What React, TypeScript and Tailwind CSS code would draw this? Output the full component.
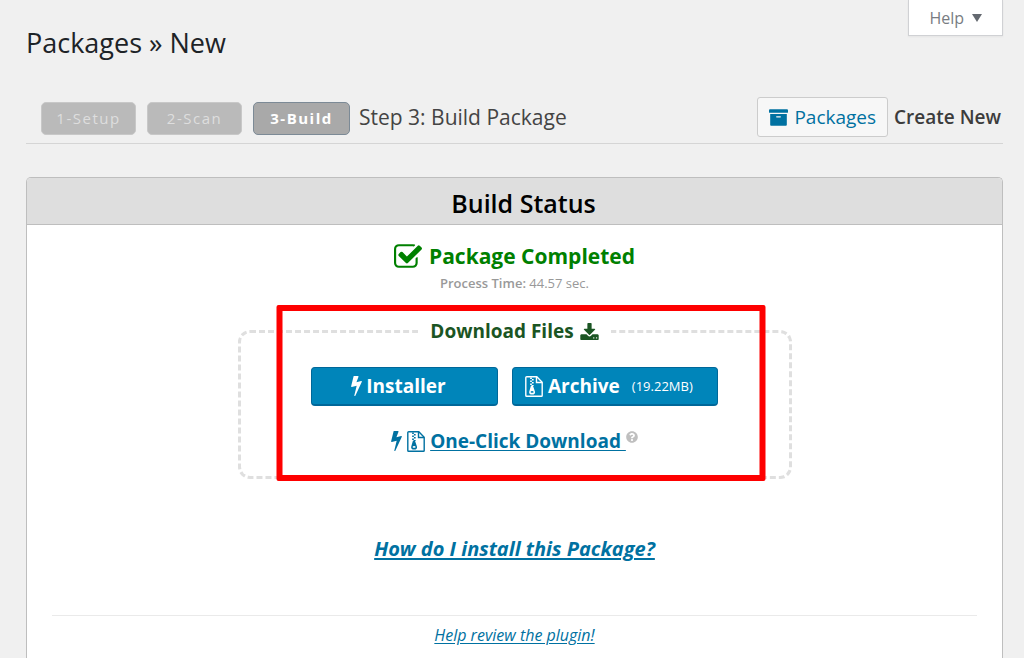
import React from "react";
import { FaArchive, FaQuestionCircle } from "react-icons/fa";

type IconProps = { className?: string };

function CheckSquareIcon({ className }: IconProps) {
  return (
    <svg viewBox="64 128 1664 1408" fill="currentColor" className={className} aria-hidden="true">
      <path d="M1472 930v318q0 119-84.5 203.5t-203.5 84.5h-832q-119 0-203.5-84.5t-84.5-203.5v-832q0-119 84.5-203.5t203.5-84.5h832q63 0 117 25 15 7 18 23 3 17-9 29l-49 49q-10 10-23 10-3 0-9-2-23-6-45-6h-832q-66 0-113 47t-47 113v832q0 66 47 113t113 47h832q66 0 113-47t47-113v-254q0-13 9-22l64-64q10-10 23-10 6 0 12 3 20 8 20 29zm231-489l-814 814q-24 24-57 24t-57-24l-430-430q-24-24-24-57t24-57l110-110q24-24 57-24t57 24l263 263 647-647q24-24 57-24t57 24l110 110q24 24 24 57t-24 57z" />
    </svg>
  );
}

function BoltIcon({ className }: IconProps) {
  return (
    <svg viewBox="448 128 896 1664" fill="currentColor" className={className} aria-hidden="true">
      <path d="M1333 566q18 20 7 44l-540 1157q-13 25-42 25-4 0-14-2-17-5-25.5-19t-4.5-30l197-808-406 101q-4 1-12 1-18 0-31-11-18-15-13-39l201-825q4-14 16-23t28-9h328q19 0 32 12.5t13 29.5q0 8-5 18l-171 463 396-98q8-2 12-2 19 0 34 15z" />
    </svg>
  );
}

function DownloadIcon({ className }: IconProps) {
  return (
    <svg viewBox="64 0 1664 1536" fill="currentColor" className={className} aria-hidden="true">
      <path d="M1344 1344q0-26-19-45t-45-19-45 19-19 45 19 45 45 19 45-19 19-45zm256 0q0-26-19-45t-45-19-45 19-19 45 19 45 45 19 45-19 19-45zm128-224v320q0 40-28 68t-68 28h-1472q-40 0-68-28t-28-68v-320q0-40 28-68t68-28h465l135 136q58 56 136 56t136-56l136-136h464q40 0 68 28t28 68zm-325-569q17 41-14 70l-448 448q-18 19-45 19t-45-19l-448-448q-31-29-14-70 17-39 59-39h256v-448q0-26 19-45t45-19h256q26 0 45 19t19 45v448h256q42 0 59 39z" />
    </svg>
  );
}

function ZipFileIcon({ className }: IconProps) {
  return (
    <svg viewBox="0 0 18 21" fill="none" stroke="currentColor" className={className} aria-hidden="true">
      <path d="M1.8 .8h10l5.4 5.4v13.2q0 .8-.8.8H1.6q-.8 0-.8-.8V1.6q0-.8 1-.8z" strokeWidth="1.4" />
      <path d="M11.5 1v5.5H17" strokeWidth="1.4" />
      <path d="M6 1.5v8M7.8 3v7" strokeWidth="1.7" strokeDasharray="1.5 1.5" />
      <path
        d="M6 9.5h1.9l2.1 6.2q.5 2.8-2.9 2.8t-2.9-2.8zM7.1 15q-1.5 0-1.5.9t1.5.9 1.5-.9-1.5-.9z"
        fill="currentColor"
        fillRule="evenodd"
        stroke="none"
      />
    </svg>
  );
}

export default function App() {
  return (
    <div className="flex min-h-screen flex-col bg-[#f0f0f0] pl-[26px] pr-[21px] font-['Open_Sans','Noto_Sans',sans-serif] text-[#3c434a]">
      <header className="flex items-start justify-between">
        <h1 className="pt-[25px] text-[27px] leading-9 font-normal text-[#1d2327]">Packages » New</h1>
        <button className="flex h-9 items-center gap-2 border border-t-0 border-[#d0d1d4] bg-white px-5 text-base text-[#787c82] shadow-xs">
          Help
          <svg viewBox="0 0 10 8" className="h-2 w-2.5 fill-[#646970]" aria-hidden="true">
            <path d="M0 0h10L5 8z" />
          </svg>
        </button>
      </header>

      <div className="mt-9 flex h-[47px] items-start justify-between border-b border-[#d5d5d5]">
        <div className="flex items-center pl-[15px]">
          <ol className="flex items-center gap-[11px] pt-[5px] text-center text-[15px] leading-[31px] tracking-widest">
            <li className="w-[95px] rounded-[5px] border border-[#c8c8c8] bg-[#bababa] text-[#dedede]">1-Setup</li>
            <li className="w-[95px] rounded-[5px] border border-[#c8c8c8] bg-[#bababa] text-[#dedede]">2-Scan</li>
            <li className="w-[97px] rounded-[5px] border border-[#7c8a96] bg-[#a9a9a9] font-bold text-white">3-Build</li>
          </ol>
          <span className="pt-0.5 pl-[9px] text-[21px] leading-8 font-normal text-[#444]">Step 3: Build Package</span>
        </div>
        <div className="flex items-center gap-[6px] pr-0.5">
          <a href="#packages" className="flex h-10 items-center gap-[6px] rounded-[3px] border border-[#ccc] bg-[#f7f7f7] px-[11px] text-[19px] font-medium text-[#0071a1]">
            <FaArchive className="size-[19px]" />
            Packages
          </a>
          <span className="text-[19px] font-semibold text-[#3c3c3c]">Create New</span>
        </div>
      </div>

      <main className="mt-[33px] flex grow flex-col rounded-t-[5px] border border-b-0 border-[#bebebe] bg-white">
        <h2 className="rounded-t-[4px] border-b border-[#bebebe] bg-[#dedede] pt-1 pl-[18px] text-center text-[25px] leading-[42px] font-semibold text-black">
          Build Status
        </h2>
        <div className="flex flex-col items-center px-[25px]">
          <div className="flex items-center gap-[7px] pt-[15px] text-[21px] leading-8 font-bold text-[#008000]">
            <CheckSquareIcon className="h-6 w-7" />
            Package Completed
          </div>
          <p className="pt-[3px] text-[13px] leading-4 text-[#999]">
            <span className="font-semibold">Process Time:</span> 44.57 sec.
          </p>

          <div className="relative mt-[14px] flex w-full flex-col items-center pb-0.5">
            <fieldset className="w-[554px] max-w-full rounded-[12px] border-3 border-dashed border-[#dfdfdf] pb-5">
              <legend className="mx-auto flex items-center gap-[6px] px-3 text-[19px] leading-[52px] font-bold text-[#1b5523]">
                Download Files
                <DownloadIcon className="h-[17px] w-[19px]" />
              </legend>
              <div className="flex justify-center gap-[14px] pt-[10px] text-[19px] font-bold text-white">
                <button className="flex h-[39px] w-[187px] items-center justify-center gap-1 rounded-[4px] border border-b-2 border-[#006799] bg-[#0085ba] pr-3">
                  <BoltIcon className="h-5 w-[11px]" />
                  Installer
                </button>
                <button className="flex h-[39px] w-[206px] items-center gap-[5px] rounded-[4px] border border-b-2 border-[#006799] bg-[#0085ba] pl-3">
                  <ZipFileIcon className="h-[21px] w-[18px]" />
                  Archive
                  <span className="pt-0.5 pl-[7px] text-[13px] font-normal">(19.22MB)</span>
                </button>
              </div>
              <div className="flex items-center justify-center gap-[5px] pt-5 text-[19px] leading-[30px] font-bold text-[#0071a1]">
                <BoltIcon className="h-5 w-[11px]" />
                <ZipFileIcon className="h-[21px] w-[18px]" />
                <span className="flex items-center">
                  <a href="#download" className="underline underline-offset-2">One-Click Download&nbsp;</a>
                  <FaQuestionCircle className="mb-2 size-3 text-[#bfbfbf]" />
                </span>
              </div>
            </fieldset>
            <div className="pointer-events-none absolute inset-y-0 left-1/2 ml-1.5 w-[489px] -translate-x-1/2 rounded-[2px] border-6 border-[#fe0000]" />
          </div>

          <a href="#install" className="mt-[54px] text-xl leading-7 font-bold text-[#0071a1] italic underline underline-offset-2">
            How do I install this Package?
          </a>
          <div className="mt-[52px] w-full border-t border-[#eaeaea] pt-[7px] text-center">
            <a href="#review" className="text-base leading-6 text-[#0071a1] italic underline underline-offset-2">Help review the plugin!</a>
          </div>
        </div>
      </main>
    </div>
  );
}
